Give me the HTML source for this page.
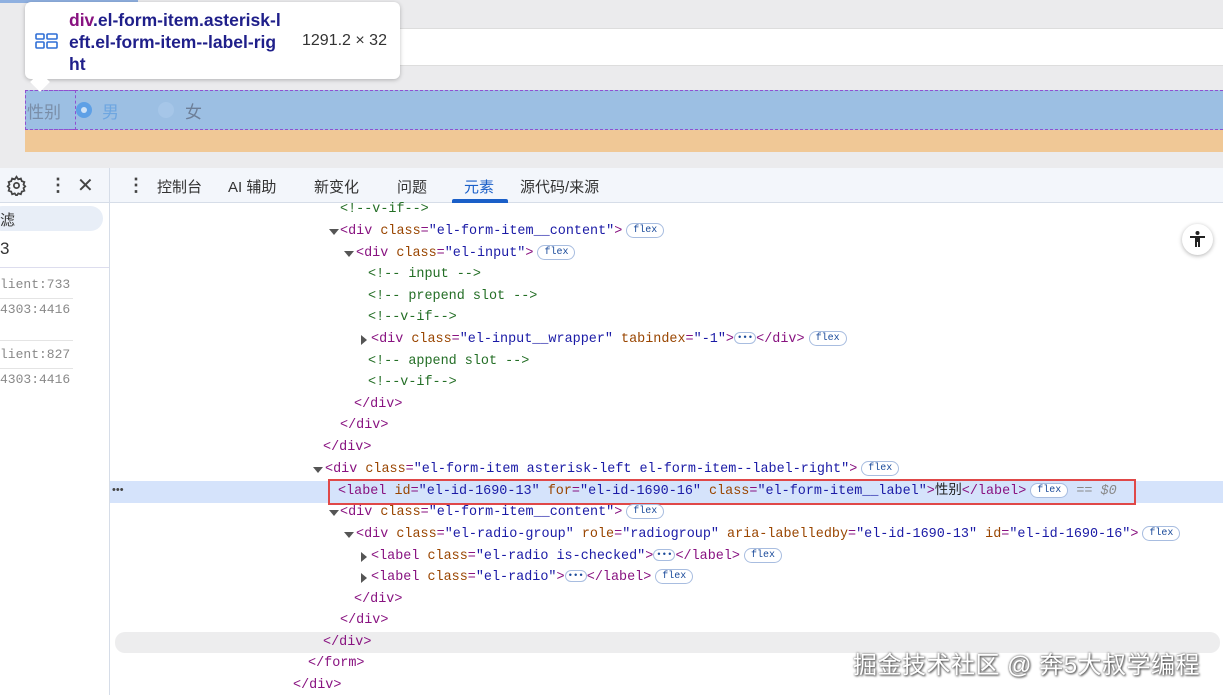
<!DOCTYPE html>
<html><head><meta charset="utf-8"><style>
*{margin:0;padding:0;box-sizing:border-box}
body{width:1223px;height:695px;overflow:hidden;background:#fff;position:relative;font-family:"Liberation Sans","Noto Sans CJK SC",sans-serif}
.abs{position:absolute}
.code{position:absolute;font-family:"Liberation Mono","Noto Sans CJK SC",monospace;font-size:13.45px;line-height:21px;white-space:pre;color:#881280}
.a{color:#994500}.v{color:#1a1aa6}.c{color:#236e25}.t{color:#222}
.flex{display:inline-block;font-size:10px;line-height:13px;border:1px solid #a8bde0;border-radius:8px;padding:0 6px;color:#1a4a9a;background:#fff;vertical-align:middle;margin-left:4px;font-family:"Liberation Mono",monospace}
.dots{display:inline-block;font-size:9px;line-height:10px;border:1px solid #a8bde0;border-radius:6px;padding:0 2px;color:#1a4a9a;vertical-align:middle}
.tri{position:absolute;width:0;height:0}
.td{border-left:5px solid transparent;border-right:5px solid transparent;border-top:6px solid #555}
.tr{border-top:5px solid transparent;border-bottom:5px solid transparent;border-left:6px solid #555}
.tab{position:absolute;top:176px;font-size:15px;color:#333}
.lg{position:absolute;left:0;font-family:"Liberation Mono",monospace;font-size:13px;color:#888}
</style></head><body>
<div class="abs" style="left:0;top:0;width:1223px;height:168px;background:#ebebed"></div>
<div class="abs" style="left:0;top:0;width:138px;height:3px;background:#8fb0e0"></div>
<div class="abs" style="left:25px;top:28px;width:1198px;height:38px;background:#fff;border-top:1px solid #ddd;border-bottom:1px solid #ddd"></div>
<div class="abs" style="left:25px;top:90px;width:1198px;height:40px;background:#9cbfe3;border:1px dashed #9050d0;border-right:none"></div>
<div class="abs" style="left:25px;top:90px;width:51px;height:40px;border:1px dashed #9050d0"></div>
<div class="abs" style="left:27px;top:98px;font-size:17px;color:#7a8ea8">性别</div>
<div class="abs" style="left:76px;top:102px;width:16px;height:16px;border-radius:50%;background:#5ea0e6"></div>
<div class="abs" style="left:81px;top:107px;width:6px;height:6px;border-radius:50%;background:#cfe2f7"></div>
<div class="abs" style="left:102px;top:98px;font-size:17px;color:#6ea6e0">男</div>
<div class="abs" style="left:158px;top:102px;width:16px;height:16px;border-radius:50%;background:#a6c6e8"></div>
<div class="abs" style="left:185px;top:98px;font-size:17px;color:#6d7f98">女</div>
<div class="abs" style="left:25px;top:130px;width:1198px;height:22px;background:#f0c896"></div>
<div class="abs" style="left:25px;top:2px;width:375px;height:77px;background:#fff;border-radius:6px;box-shadow:0 1px 4px rgba(0,0,0,.25)"></div>
<div class="abs" style="left:33px;top:75px;width:14px;height:14px;background:#fff;transform:rotate(45deg)"></div>
<svg class="abs" style="left:35px;top:33px" width="24" height="16" viewBox="0 0 24 16" fill="none" stroke="#2f6fd6" stroke-width="1.6"><rect x="1" y="1" width="8" height="5" rx="1"/><rect x="12" y="1" width="10" height="5" rx="1"/><rect x="1" y="9" width="8" height="6" rx="1"/><rect x="12" y="9" width="10" height="6" rx="1"/></svg>
<div class="abs" style="left:69px;top:9px;white-space:nowrap;font-size:17.5px;font-weight:bold;line-height:22px;color:#1f1f8a"><span style="color:#881280">div</span>.el-form-item.asterisk-l<br>eft.el-form-item--label-rig<br>ht</div>
<div class="abs" style="left:302px;top:32px;font-size:16px;color:#333">1291.2 × 32</div>
<div class="abs" style="left:0;top:168px;width:1223px;height:35px;background:#f3f6fb;border-bottom:1px solid #d6dde8"></div>
<div class="abs" style="left:109px;top:168px;width:1px;height:527px;background:#d6dde8"></div>
<svg class="abs" style="left:6px;top:175px" width="21" height="21" viewBox="0 0 24 24" fill="none" stroke="#444" stroke-width="2"><circle cx="12" cy="12" r="3"/><path d="M12 2l2 3 3-1 1 3 3 1-1 3 2 2-2 2 1 3-3 1-1 3-3-1-2 3-2-3-3 1-1-3-3-1 1-3-2-2 2-2-1-3 3-1 1-3 3 1z"/></svg>
<div class="abs" style="left:49px;top:176px;font-size:18px;line-height:18px;color:#444;font-weight:bold">⋮</div>
<div class="abs" style="left:77px;top:173px;font-size:20px;color:#444">✕</div>
<div class="abs" style="left:127px;top:176px;font-size:18px;line-height:18px;color:#444;font-weight:bold">⋮</div>
<div class="tab" style="left:157px">控制台</div>
<div class="tab" style="left:228px">AI 辅助</div>
<div class="tab" style="left:314px">新变化</div>
<div class="tab" style="left:397px">问题</div>
<div class="tab" style="left:464px;color:#1a5fc8">元素</div>
<div class="abs" style="left:452px;top:199px;width:56px;height:4px;background:#1a5fc8;border-radius:2px 2px 0 0"></div>
<div class="tab" style="left:520px">源代码/来源</div>
<div class="abs" style="left:-10px;top:206px;width:113px;height:25px;background:#e8eef7;border-radius:13px"></div>
<div class="abs" style="left:0;top:209px;font-size:15px;color:#333">滤</div>
<div class="abs" style="left:0;top:239px;font-size:17px;color:#333">3</div>
<div class="abs" style="left:0;top:267px;width:109px;height:1px;background:#dde"></div>
<div class="lg" style="top:277px">lient:733</div>
<div class="abs" style="left:0;top:298px;width:73px;height:1px;background:#e4e4e4"></div>
<div class="lg" style="top:302px">4303:4416</div>
<div class="abs" style="left:0;top:340px;width:73px;height:1px;background:#e4e4e4"></div>
<div class="lg" style="top:347px">lient:827</div>
<div class="abs" style="left:0;top:368px;width:73px;height:1px;background:#e4e4e4"></div>
<div class="lg" style="top:372px">4303:4416</div>
<div class="abs" style="left:110px;top:481px;width:1113px;height:22px;background:#d5e3fb"></div>
<div class="abs" style="left:112px;top:484px;font-size:11px;color:#444">•••</div>
<div class="abs" style="left:328px;top:479px;width:808px;height:26px;border:2px solid #e04848"></div>
<div class="abs" style="left:115px;top:632px;width:1105px;height:21px;background:#ededee;border-radius:10px"></div>
<div class="abs" style="left:1182px;top:224px;width:31px;height:31px;border-radius:50%;background:#fff;box-shadow:0 1px 4px rgba(0,0,0,.3)"></div>
<svg class="abs" style="left:1187px;top:229px" width="21" height="21" viewBox="0 0 21 21" fill="#222"><circle cx="10.5" cy="4" r="2"/><rect x="3" y="7" width="15" height="2"/><rect x="8" y="7" width="5" height="6"/><rect x="8" y="12" width="2" height="6"/><rect x="11" y="12" width="2" height="6"/></svg>
<div class="code" style="left:340px;top:199px"><span class="c">&lt;!--v-if--&gt;</span></div>
<div class="tri td" style="left:329px;top:229px"></div>
<div class="code" style="left:340px;top:221px">&lt;div <span class="a">class</span>=<span class="v">"el-form-item__content"</span>&gt;<span class="flex">flex</span></div>
<div class="tri td" style="left:344px;top:251px"></div>
<div class="code" style="left:356px;top:243px">&lt;div <span class="a">class</span>=<span class="v">"el-input"</span>&gt;<span class="flex">flex</span></div>
<div class="code" style="left:368px;top:264px"><span class="c">&lt;!-- input --&gt;</span></div>
<div class="code" style="left:368px;top:286px"><span class="c">&lt;!-- prepend slot --&gt;</span></div>
<div class="code" style="left:368px;top:307px"><span class="c">&lt;!--v-if--&gt;</span></div>
<div class="tri tr" style="left:361px;top:335px"></div>
<div class="code" style="left:371px;top:329px">&lt;div <span class="a">class</span>=<span class="v">"el-input__wrapper"</span> <span class="a">tabindex</span>=<span class="v">"-1"</span>&gt;<span class="dots">•••</span>&lt;/div&gt;<span class="flex">flex</span></div>
<div class="code" style="left:368px;top:351px"><span class="c">&lt;!-- append slot --&gt;</span></div>
<div class="code" style="left:368px;top:372px"><span class="c">&lt;!--v-if--&gt;</span></div>
<div class="code" style="left:354px;top:394px">&lt;/div&gt;</div>
<div class="code" style="left:340px;top:415px">&lt;/div&gt;</div>
<div class="code" style="left:323px;top:437px">&lt;/div&gt;</div>
<div class="tri td" style="left:313px;top:467px"></div>
<div class="code" style="left:325px;top:459px">&lt;div <span class="a">class</span>=<span class="v">"el-form-item asterisk-left el-form-item--label-right"</span>&gt;<span class="flex">flex</span></div>
<div class="code" style="left:338px;top:481px">&lt;label <span class="a">id</span>=<span class="v">"el-id-1690-13"</span> <span class="a">for</span>=<span class="v">"el-id-1690-16"</span> <span class="a">class</span>=<span class="v">"el-form-item__label"</span>&gt;<span class="t">性别</span>&lt;/label&gt;<span class="flex">flex</span><span style="color:#888;font-style:italic"> == $0</span></div>
<div class="tri td" style="left:329px;top:510px"></div>
<div class="code" style="left:340px;top:502px">&lt;div <span class="a">class</span>=<span class="v">"el-form-item__content"</span>&gt;<span class="flex">flex</span></div>
<div class="tri td" style="left:344px;top:532px"></div>
<div class="code" style="left:356px;top:524px">&lt;div <span class="a">class</span>=<span class="v">"el-radio-group"</span> <span class="a">role</span>=<span class="v">"radiogroup"</span> <span class="a">aria-labelledby</span>=<span class="v">"el-id-1690-13"</span> <span class="a">id</span>=<span class="v">"el-id-1690-16"</span>&gt;<span class="flex">flex</span></div>
<div class="tri tr" style="left:361px;top:552px"></div>
<div class="code" style="left:371px;top:546px">&lt;label <span class="a">class</span>=<span class="v">"el-radio is-checked"</span>&gt;<span class="dots">•••</span>&lt;/label&gt;<span class="flex">flex</span></div>
<div class="tri tr" style="left:361px;top:573px"></div>
<div class="code" style="left:371px;top:567px">&lt;label <span class="a">class</span>=<span class="v">"el-radio"</span>&gt;<span class="dots">•••</span>&lt;/label&gt;<span class="flex">flex</span></div>
<div class="code" style="left:354px;top:589px">&lt;/div&gt;</div>
<div class="code" style="left:340px;top:610px">&lt;/div&gt;</div>
<div class="code" style="left:323px;top:632px">&lt;/div&gt;</div>
<div class="code" style="left:308px;top:653px">&lt;/form&gt;</div>
<div class="code" style="left:293px;top:675px">&lt;/div&gt;</div>
<div class="abs" style="left:853px;top:645px;font-size:24px;color:#fff;text-shadow:0 0 2px #555,1px 1px 2px #444;letter-spacing:0.5px">掘金技术社区 @ 奔5大叔学编程</div>
</body></html>
